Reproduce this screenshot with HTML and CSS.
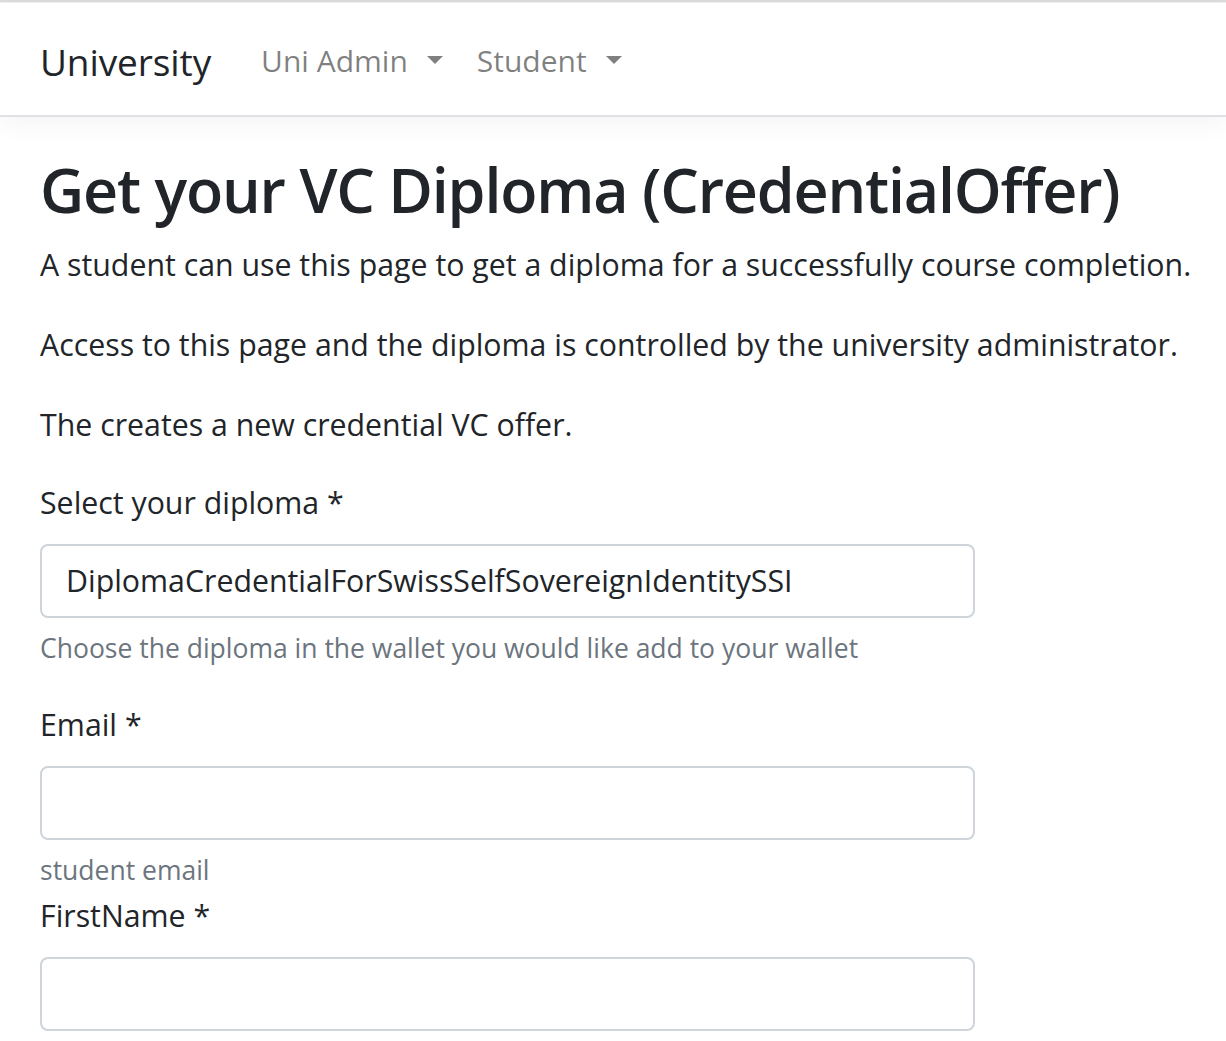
FILE: index.html
```html
<!DOCTYPE html>
<html lang="en">
<head>
<meta charset="utf-8">
<title>Get your VC Diploma</title>
<link rel="stylesheet" href="styles.css">
</head>
<body>
<div class="topline"></div>
<nav class="navbar">
  <a class="brand" href="#">University</a>
  <ul class="nav">
    <li class="nav-item"><a class="nav-link" href="#">Uni Admin<span class="caret"></span></a></li>
    <li class="nav-item"><a class="nav-link" href="#">Student<span class="caret"></span></a></li>
  </ul>
</nav>
<main class="content">
  <h1 class="title">Get your VC Diploma (CredentialOffer)</h1>
  <p class="lead-p">A student can use this page to get a diploma for a successfully course completion.</p>
  <p class="para">Access to this page and the diploma is controlled by the university administrator.</p>
  <p class="para">The creates a new credential VC offer.</p>
  <form class="form">
    <div class="group">
      <label class="label">Select your diploma *</label>
      <div class="control">DiplomaCredentialForSwissSelfSovereignIdentitySSI</div>
      <small class="help help-first">Choose the diploma in the wallet you would like add to your wallet</small>
    </div>
    <div class="group">
      <label class="label">Email *</label>
      <div class="control"></div>
      <small class="help help-second">student email</small>
    </div>
    <div class="group">
      <label class="label">FirstName *</label>
      <div class="control"></div>
    </div>
  </form>
</main>
</body>
</html>
```
FILE: styles.css
```css
html, body {
  margin: 0;
  padding: 0;
  background: #fff;
  font-family: "Open Sans", "Noto Sans", sans-serif;
  color: #212529;
  overflow: hidden;
}
.topline {
  height: 2px;
  background: #dcdcdc;
  border-bottom: 1px solid #f2f2f2;
}
.navbar {
  height: 112px;
  display: flex;
  align-items: center;
  padding: 0 40px;
  border-bottom: 2px solid #dfe1e4;
  box-shadow: 0 6px 24px rgba(0, 0, 0, 0.05);
  position: relative;
  background: #fff;
}
.brand {
  font-size: 37px;
  line-height: 50px;
  padding-top: 5px;
  color: #212529;
  text-decoration: none;
  letter-spacing: -0.1px;
  margin-right: 50px;
}
.nav {
  list-style: none;
  display: flex;
  margin: 0;
  padding: 0;
  gap: 34px;
}
.nav-link {
  font-size: 30px;
  line-height: 45px;
  padding-top: 3px;
  color: rgba(0, 0, 0, 0.5);
  text-decoration: none;
  display: flex;
  align-items: flex-start;
}
.caret {
  display: block;
  width: 0;
  height: 0;
  margin-left: 19px;
  margin-top: 18px;
  border-top: 8px solid rgba(0, 0, 0, 0.5);
  border-left: 8px solid transparent;
  border-right: 8px solid transparent;
}
.content {
  padding: 0 10px 0 40px;
}
.title {
  font-size: 61px;
  font-weight: 600;
  line-height: 73px;
  margin: 36px 0 0;
  letter-spacing: -1.2px;
}
.lead-p, .para {
  font-size: 30.3px;
  line-height: 42px;
  margin: 0;
  white-space: nowrap;
}
.lead-p { margin-top: 18px; }
.para { margin-top: 38px; }
.form { margin-top: 36px; }
.group { display: flex; flex-direction: column; align-items: flex-start; }
.label {
  font-size: 30.3px;
  line-height: 42px;
  margin-bottom: 20px;
}
.control {
  box-sizing: border-box;
  width: 935px;
  height: 74px;
  border: 2px solid #ced4da;
  border-radius: 8px;
  padding: 0 24px;
  font-size: 30.3px;
  line-height: 70px;
  color: #212529;
}
.help {
  font-size: 26.5px;
  line-height: 40px;
  color: #6c757d;
  margin-top: 10px;
}
.help-first { margin-bottom: 36px; }
.help-second { margin-bottom: 5px; }
```
